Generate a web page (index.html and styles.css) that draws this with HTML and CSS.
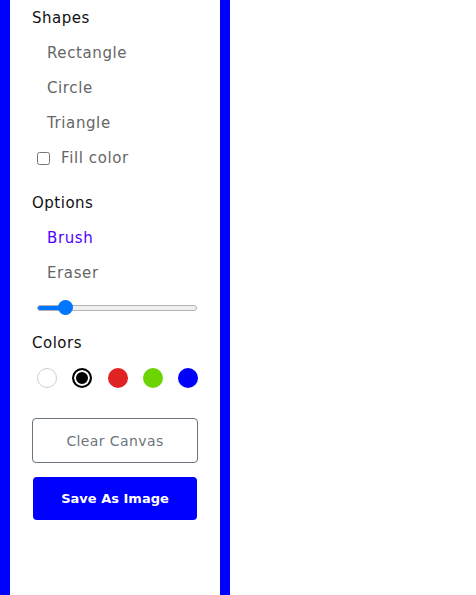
FILE: index.html
```html
<!DOCTYPE html>
<html>
<head>
<meta charset="utf-8">
<link rel="stylesheet" href="styles.css">
</head>
<body>
<div class="app">
  <aside class="sidebar">
    <section class="group">
      <h3 class="title">Shapes</h3>
      <ul class="list">
        <li class="item">Rectangle</li>
        <li class="item">Circle</li>
        <li class="item">Triangle</li>
        <li class="item check"><input type="checkbox" class="box"><label>Fill color</label></li>
      </ul>
    </section>
    <section class="group options">
      <h3 class="title">Options</h3>
      <ul class="list">
        <li class="item active">Brush</li>
        <li class="item">Eraser</li>
        <li class="item slider-row"><input type="range" class="slider" min="0" max="100" value="14"></li>
      </ul>
    </section>
    <section class="group">
      <h3 class="title">Colors</h3>
      <div class="colors">
        <span class="swatch white"></span>
        <span class="swatch black selected"></span>
        <span class="swatch red"></span>
        <span class="swatch green"></span>
        <span class="swatch blue"></span>
      </div>
    </section>
    <div class="buttons">
      <button class="btn clear">Clear Canvas</button>
      <button class="btn save">Save As Image</button>
    </div>
  </aside>
  <main class="canvas"></main>
</div>
</body>
</html>
```
FILE: styles.css
```css
* { box-sizing: border-box; }
html, body { margin: 0; padding: 0; background: #fff; }
body { font-family: "DejaVu Sans", sans-serif; }
.app { display: flex; height: 595px; }
.sidebar {
  width: 230px;
  border-left: 10px solid #0000ff;
  border-right: 10px solid #0000ff;
  padding: 0 22px;
  background: #fff;
}
.options { margin-top: 10px; }
.title {
  margin: 0;
  height: 35px;
  padding-top: 1px;
  font-weight: 400;
  font-size: 15px;
  letter-spacing: 0.5px;
  line-height: 35px;
  color: #111;
}
.list { list-style: none; margin: 0; padding: 0; }
.item {
  height: 35px;
  padding-top: 1px;
  line-height: 35px;
  font-size: 15px;
  letter-spacing: 0.6px;
  color: #666;
  padding-left: 15px;
}
.item.active { color: #4f00ff; }
.item.check { padding: 2px 0 0 1px; display: flex; align-items: center; }
.box {
  width: 13px; height: 13px;
  margin: 0 11px 0 4px;
}
.slider-row { padding: 0 0 0 5px; display: flex; align-items: center; }
.slider {
  -webkit-appearance: none;
  appearance: none;
  width: 160px;
  height: 16px;
  margin: 0;
  background: transparent;
}
.slider::-webkit-slider-runnable-track {
  height: 6px;
  border-radius: 3px;
  border: 1px solid #b3b3b3;
  background: linear-gradient(to right, #0075ff 0 28px, #efefef 28px);
}
.slider::-webkit-slider-thumb {
  -webkit-appearance: none;
  width: 15px; height: 15px;
  border-radius: 50%;
  background: #0075ff;
  margin-top: -5.5px;
}
.colors {
  height: 35px;
  padding-left: 5px;
  display: flex;
  align-items: center;
  justify-content: space-between;
}
.swatch { width: 20px; height: 20px; border-radius: 50%; display: block; }
.white { border: 1px solid #cfcfcf; background: #fff; }
.black { background: #000; border: 2px solid #000; box-shadow: inset 0 0 0 2px #fff; }
.red { background: #e02222; }
.green { background: #6cd400; }
.blue { background: #0000ff; }
.buttons { margin-top: 23px; display: flex; flex-direction: column; gap: 14px; }
.btn {
  font-family: inherit;
  border-radius: 4px;
  cursor: pointer;
}
.clear {
  height: 45px;
  background: #fff;
  border: 1px solid #6c757d;
  color: #6c757d;
  font-size: 14px;
  letter-spacing: 0.4px;
}
.save {
  height: 43px;
  margin: 0 1px;
  background: #0000ff;
  border: none;
  color: #fff;
  font-size: 13px;
  font-weight: 700;
}
.canvas { flex: 1; background: #fff; }
```
